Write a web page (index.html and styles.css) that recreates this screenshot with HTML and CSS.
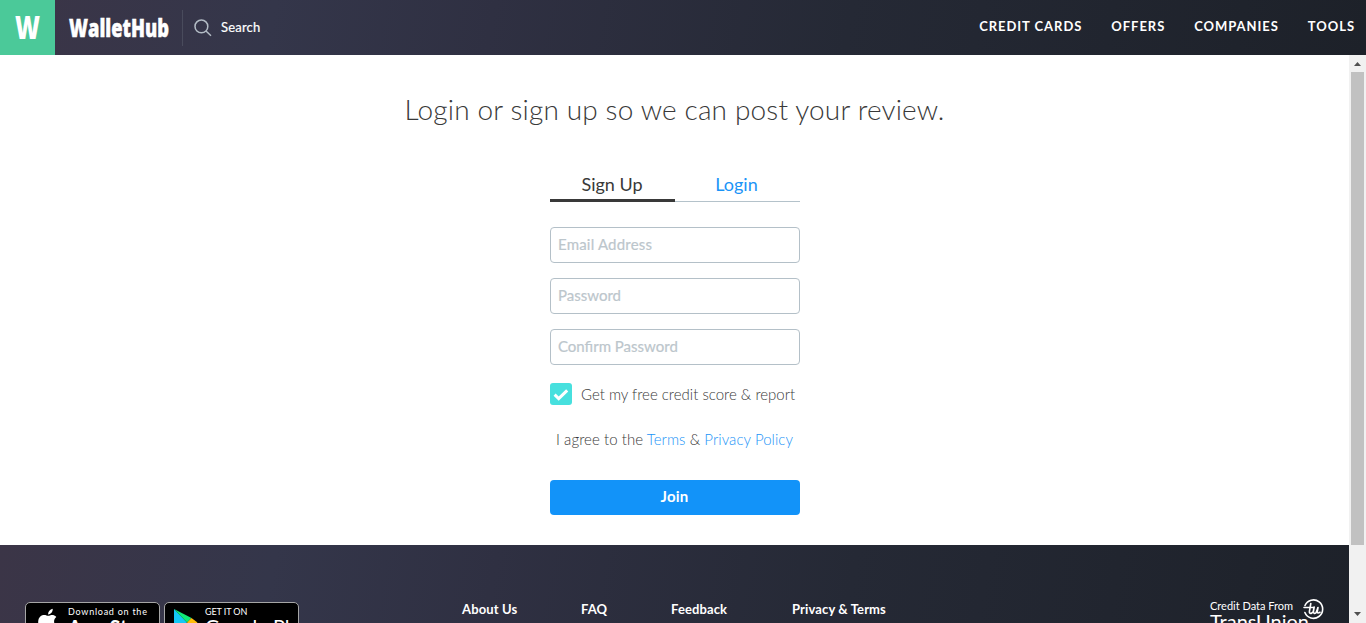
FILE: index.html
```html
<!DOCTYPE html>
<html lang="en">
<head>
<meta charset="utf-8">
<title>WalletHub</title>
<link rel="stylesheet" href="styles.css">
</head>
<body>
<header class="topbar">
  <div class="logo-mark"><svg width="55" height="55" viewBox="0 0 55 55"><text class="mark-letter" x="15" y="39" textLength="25" lengthAdjust="spacingAndGlyphs">W</text></svg></div>
  <svg class="wordmark" width="127" height="55" viewBox="0 0 127 55"><text class="mark-name" x="14" y="37" textLength="100" lengthAdjust="spacingAndGlyphs">WalletHub</text></svg>
  <div class="search">
    <svg width="18" height="18" viewBox="0 0 18 18" fill="none" stroke="#b3bcc5" stroke-width="1.5"><circle cx="7.4" cy="7.4" r="6.4"/><path d="M12 12l5 4.8"/></svg>
    <span class="search-label">Search</span>
  </div>
  <nav class="nav"><a class="n1">CREDIT CARDS</a><a class="n2">OFFERS</a><a class="n3">COMPANIES</a><a class="n4">TOOLS</a></nav>
</header>
<div class="viewport">
  <div class="page">
    <main class="content">
      <h1 class="title"><span>Login or sign up so we can post your review.</span></h1>
      <div class="form">
        <div class="tabs"><a class="tab active">Sign Up</a><a class="tab">Login</a></div>
        <div class="field f1">Email Address</div>
        <div class="field f2">Password</div>
        <div class="field f3">Confirm Password</div>
        <div class="check">
          <svg width="22" height="22" viewBox="0 0 22 22"><rect width="22" height="22" rx="3" fill="#47e0de"/><path d="M4.6 11.6l4.1 4L17.2 7.4" fill="none" stroke="#fff" stroke-width="3"/></svg>
          <span class="check-label">Get my free credit score &amp; report</span>
        </div>
        <p class="agree">I agree to the <a>Terms</a> &amp; <a>Privacy Policy</a></p>
        <div class="join"><span>Join</span></div>
      </div>
    </main>
    <footer class="footer">
      <div class="badges">
        <div class="badge">
          <svg width="22" height="27" viewBox="0 0 22 27" fill="#fff"><path d="M11 6.5C11.2 3.500 13 1.300 15.700.8 16 3.800 13.800 6.300 11 6.500Z"/><path d="M19.300 9C17.600 6.800 15 6.600 13.500 7.200 11.600 8 10.900 8 9.500 7.400 6.500 6.100 1.500 7.600 1.200 13.500 1 18 4 24.500 7.200 24.500 8.700 24.500 9.500 23.500 11.400 23.500S14 24.500 15.500 24.500C18 24.500 20 20.500 20.500 18.700 16.400 17 16 11.500 19.300 9Z"/></svg>
          <div class="badge-text"><span class="small apple-small">Download on the</span><span class="big apple-big">App Store</span></div>
        </div>
        <div class="badge play">
          <svg width="26" height="29" viewBox="0 0 26 29"><path d="M1 1v27l13-13.500Z" fill="#14c8f5"/><path d="M1 1l13 13.500L18.500 10Z" fill="#10ea78"/><path d="M18.500 10l6 4.500-6 4.500-4.500-4.500Z" fill="#ffbc0a"/><path d="M1 28l13-13.500 4.500 4.500Z" fill="#f63448"/></svg>
          <div class="badge-text"><span class="small play-small">GET IT ON</span><span class="big play-big">Google Play</span></div>
        </div>
      </div>
      <nav class="links"><a class="l1">About Us</a><a class="l2">FAQ</a><a class="l3">Feedback</a><a class="l4">Privacy &amp; Terms</a></nav>
      <div class="credit">
        <div class="credit-text"><span class="from">Credit Data From</span><span class="tu">TransUnion</span></div>
        <svg class="tu-icon" width="22" height="22" viewBox="0 0 22 22" fill="none" stroke="#fff" stroke-linecap="round" stroke-linejoin="round"><path d="M2 6.500A9.200 9.200 0 1 1 1.900 13.500" stroke-width="1.600"/><path d="M7.800 4.500L6.400 12.500Q6.200 15 8.600 14.200L10.200 12.800 11.200 8 10.400 12.500Q10.500 15.500 13 13.800L15 8.500 14.300 12.500Q14.300 15 17 13.300M1 8.500H10" stroke-width="1.600"/></svg>
      </div>
    </footer>
  </div>
  <div class="scrollbar"><i class="arrow up"></i><i class="thumb"></i><i class="arrow down"></i></div>
</div>
</body>
</html>
```

FILE: styles.css
```css
* { box-sizing: border-box; }
body { margin: 0; width: 1366px; height: 623px; overflow: hidden; background: #fff; font-family: Lato, "Liberation Sans", sans-serif; color: #393939; display: flex; flex-direction: column; }
a { white-space: nowrap; }
.topbar, .footer { background: linear-gradient(100deg, #3b3547 0%, #34364a 20%, #2f3042 36%, #252935 62%, #1d2129 100%); color: #fff; }
.topbar { height: 55px; flex: none; display: flex; align-items: center; padding-right: 12px; }
.logo-mark { width: 55px; height: 55px; background: #4bc999; }
.mark-letter, .mark-name { font-family: "Open Sans", sans-serif; font-weight: 800; fill: #fff; font-size: 32px; }
.mark-name { font-size: 25px; stroke: #fff; stroke-width: .5px; }
.search { height: 36px; border-left: 1px solid #494b5c; display: flex; align-items: center; padding-left: 11px; gap: 9px; font-size: 13px; letter-spacing: .2px; }
.search-label { padding-bottom: 2px; -webkit-text-stroke: .2px #fff; }
.nav { margin-left: auto; display: flex; gap: 30px; font-size: 13px; font-weight: 700; letter-spacing: .95px; padding-bottom: 3px; }
.nav a { margin-right: -1px; }
.viewport { flex: 1; min-height: 0; display: flex; }
.page { width: 1349px; overflow: hidden; }
.content { height: 490px; padding-top: 36px; }
.title { margin: 0; text-align: center; font-size: 28px; font-weight: 300; line-height: 36px; letter-spacing: .16px; white-space: nowrap; }
.form { width: 250px; margin: 44px 0 0 550px; }
.tabs { display: flex; height: 31px; margin-bottom: 25px; font-size: 18px; }
.tab { width: 125px; text-align: center; border-bottom: 1px solid #b4c2ca; line-height: 27px; color: #1b94f7; padding-right: 2px; }
.tab.active { color: #393939; border-bottom: 3px solid #393939; padding-right: 1px; }
.field { height: 36px; border: 1px solid #b4c0c8; border-radius: 4px; margin-bottom: 15px; padding-left: 7px; line-height: 33px; font-size: 15px; color: #bcc6cc; -webkit-text-stroke: .2px #bcc6cc; }
.f1 { letter-spacing: .2px; }
.check { display: flex; align-items: center; gap: 9px; margin-top: 18px; font-size: 15px; font-weight: 300; height: 22px; white-space: nowrap; }
.agree { margin: 23px 0 0 6px; font-size: 15px; line-height: 22px; font-weight: 300; letter-spacing: .06px; white-space: nowrap; }
.agree a { color: #1b94f7; }
.join { margin-top: 30px; height: 35px; border-radius: 4px; background: #1293f9; color: #fff; font-weight: 700; font-size: 15px; letter-spacing: .2px; line-height: 33px; text-align: center; padding-right: 1px; }
.footer { height: 200px; padding: 57px 26px 0 25px; display: flex; align-items: flex-start; }
.badges { display: flex; gap: 4px; }
.badge { width: 135px; height: 40px; border: 1px solid #a6a6a6; border-radius: 5px; background: #000; display: flex; padding: 5px 0 0 11px; gap: 9px; }
.badge svg { flex: none; }
.play { padding-left: 8px; gap: 6px; }
.badge-text { display: flex; flex-direction: column; white-space: nowrap; margin-top: -1px; }
.small { font-size: 9px; line-height: 10px; }
.apple-small { letter-spacing: .75px; }
.play-small { letter-spacing: -.1px; }
.big { font-size: 20px; line-height: 20px; font-weight: 700; }
.play-big { font-weight: 400; margin-top: -1px; }
.links { display: flex; font-size: 13px; font-weight: 700; line-height: 14px; letter-spacing: .12px; margin-left: 163px; }
.links a { width: 119px; }
.links .l2 { width: 90px; }
.links .l3 { width: 121px; }
.credit { margin-left: auto; display: flex; gap: 3px; margin: -3px -2px 0 auto; }
.credit-text { width: 90px; display: flex; flex-direction: column; white-space: nowrap; }
.from { font-size: 11px; line-height: 14px; }
.tu { font-size: 20px; line-height: 17px; }
.scrollbar { width: 17px; background: #f1f1f1; display: flex; flex-direction: column; align-items: center; }
.thumb { width: 13px; height: 473px; background: #c1c1c1; }
.arrow { width: 7px; height: 4px; background: #505050; }
.up { margin: 7px 0 6px; clip-path: polygon(50% 0, 100% 100%, 0 100%); }
.down { margin-top: 67px; clip-path: polygon(0 0, 100% 0, 50% 100%); }
```
